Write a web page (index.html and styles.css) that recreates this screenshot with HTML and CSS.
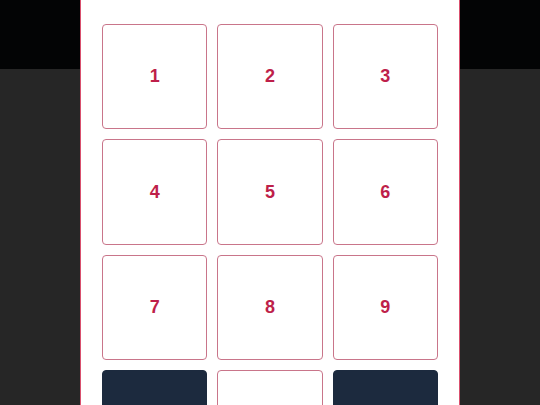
FILE: index.html
```html
<!DOCTYPE html>
<html lang="en">
<head>
  <meta charset="UTF-8">
  <meta name="viewport" content="width=device-width, initial-scale=1">
  <title>Keypad</title>
  <link rel="stylesheet" href="styles.css">
</head>
<body>
  <header class="topbar"></header>
  <main class="page"></main>

  <div class="modal">
    <div class="keypad">
      <button class="key">1</button>
      <button class="key">2</button>
      <button class="key">3</button>
      <button class="key">4</button>
      <button class="key">5</button>
      <button class="key">6</button>
      <button class="key">7</button>
      <button class="key">8</button>
      <button class="key">9</button>
      <button class="key key-dark"></button>
      <button class="key"></button>
      <button class="key key-dark"></button>
    </div>
  </div>
</body>
</html>
```

FILE: styles.css
```css
body {
  margin: 0;
  height: 100vh;
  overflow: hidden;
  background: #262626;
  font-family: "Liberation Sans", Arial, sans-serif;
}
.topbar {
  height: 69px;
  background: #030405;
}
.modal {
  position: absolute;
  top: 0;
  left: 80px;
  width: 380px;
  box-sizing: border-box;
  padding: 24px 21px 21px;
  background: #fff;
  border: 1px solid #d9506e;
  border-top: none;
}
.keypad {
  display: grid;
  grid-template-columns: repeat(3, 1fr);
  gap: 10px;
}
.key {
  aspect-ratio: 1 / 1;
  background: #fff;
  border: 1px solid #c9758a;
  border-radius: 4px;
  color: #be1f4a;
  font-family: "Liberation Sans", Arial, sans-serif;
  font-size: 18px;
  font-weight: bold;
  padding: 0;
  cursor: pointer;
}
.key-dark {
  background: #1c2a3e;
  border-color: #1c2a3e;
}
```
